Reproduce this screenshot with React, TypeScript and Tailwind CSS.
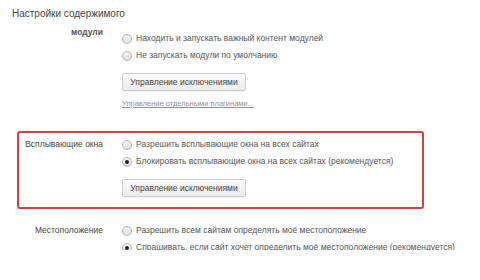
type Opt = { text: string; checked?: boolean };

function Radio({ checked }: { checked?: boolean }) {
  return (
    <span className="relative flex h-[10px] w-[10px] shrink-0 items-center justify-center rounded-full border border-[#b4b4b4] bg-gradient-to-b from-[#f4f4f4] to-[#e2e2e2]">
      {checked && <span className="h-[4px] w-[4px] rounded-full bg-[#222]" />}
    </span>
  );
}

function Button() {
  return (
    <button className="flex h-[18px] w-[124px] items-center justify-center rounded-[2px] border border-[#cdcdcd] bg-gradient-to-b from-[#fafafa] to-[#ececec] text-[8.5px] text-[#444] shadow-[0_1px_1px_rgba(0,0,0,0.06)]">
      Управление исключениями
    </button>
  );
}

function Section({
  label,
  options,
  highlight,
  button,
  link,
  labelClass,
  className,
}: {
  label: string;
  options: Opt[];
  highlight?: boolean;
  button?: boolean;
  link?: string;
  labelClass?: string;
  className?: string;
}) {
  return (
    <div
      className={`flex w-[407px] rounded-[3px] border-2 pt-[3px] pb-[10px] ${
        highlight ? "border-[#d93f3f]" : "border-transparent"
      } ${className ?? ""}`}
    >
      <div
        className={`w-[84px] shrink-0 whitespace-nowrap text-right text-[8.5px] leading-[17px] text-[#444] ${labelClass ?? ""}`}
      >
        {label}
      </div>
      <div className="ml-[19px] flex flex-col">
        {options.map((o) => (
          <div key={o.text} className="flex h-[17px] items-center gap-[4px] text-[8.5px] text-[#555]">
            <Radio checked={o.checked} />
            <span className="whitespace-nowrap">{o.text}</span>
          </div>
        ))}
        {button && (
          <div className="mt-[9px]">
            <Button />
          </div>
        )}
        {link && (
          <a className="mt-[8px] whitespace-nowrap text-[7.5px] leading-[10px] text-[#8a93a3] underline">
            {link}
          </a>
        )}
      </div>
    </div>
  );
}

export default function App() {
  return (
    <div
      className="h-[250px] w-[480px] overflow-hidden bg-white"
      style={{ fontFamily: '"Liberation Sans", Arial, sans-serif' }}
    >
      <div className="pl-[12px] pt-[6px] text-[10px] leading-[16px] text-[#444]">Настройки содержимого</div>
      <div className="pl-[17px]">
        <Section
          className="mt-[3px] pb-[8px]"
          label="модули"
          labelClass="-mt-[6px] font-bold text-[#555]"
          options={[
            { text: "Находить и запускать важный контент модулей" },
            { text: "Не запускать модули по умолчанию" },
          ]}
          button
          link="Управление отдельными плагинами..."
        />
        <Section
          className="mt-[10px]"
          label="Всплывающие окна"
          highlight
          options={[
            { text: "Разрешить всплывающие окна на всех сайтах" },
            { text: "Блокировать всплывающие окна на всех сайтах (рекомендуется)", checked: true },
          ]}
          button
        />
        <Section
          className="mt-[8px]"
          label="Местоположение"
          options={[
            { text: "Разрешить всем сайтам определять моё местоположение" },
            { text: "Спрашивать, если сайт хочет определить моё местоположение (рекомендуется)", checked: true },
          ]}
        />
      </div>
    </div>
  );
}
